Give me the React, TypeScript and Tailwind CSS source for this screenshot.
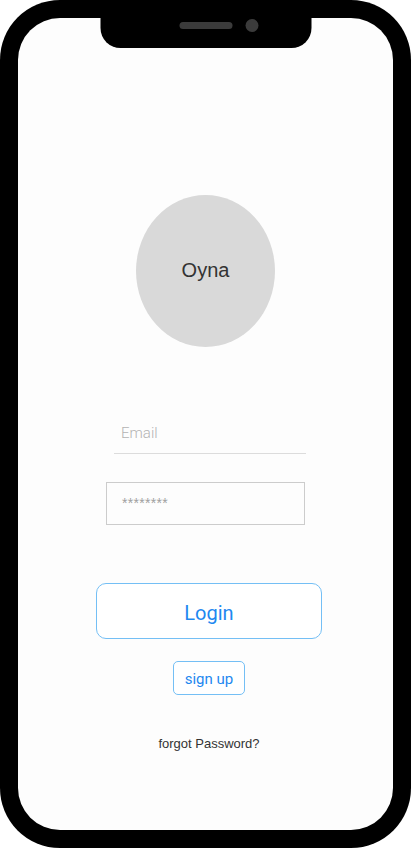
export default function App() {
  return (
    <main className="h-[848px] w-[411px] bg-white">
      <div className="h-full w-full rounded-[60px] bg-black p-[18px]">
        <div className="relative flex h-full w-full flex-col items-center rounded-[42px] bg-[#fdfdfd]">
          {/* notch */}
          <div className="absolute left-1/2 top-0 flex h-[30px] w-[211px] -translate-x-1/2 items-center justify-center gap-[13px] rounded-b-[20px] bg-black pb-[15px] pl-[26px]">
            <span className="h-[7px] w-[53px] rounded-full bg-[#3b3b3b]" />
            <span className="h-[13px] w-[13px] rounded-full bg-[#3b3b3b]" />
          </div>

          <div className="mt-[177px] flex h-[152px] w-[139px] items-center justify-center rounded-[50%] bg-[#d9d9d9] pb-[2px]">
            <span className="font-['Liberation_Sans',sans-serif] text-[20px] text-[#333]">Oyna</span>
          </div>

          <div className="ml-[9px] mt-[76px] w-[192px] border-b border-[#dcdcdc] pb-[10px] pl-[7px]">
            <span className="block font-['Roboto',sans-serif] text-[15px] font-light leading-[20px] text-[#b3b3b3]">
              Email
            </span>
          </div>

          <div className="mt-[28px] flex h-[43px] w-[199px] items-center border border-[#cccccc] pl-[15px]">
            <span className="font-['Liberation_Sans',sans-serif] text-[14px] tracking-[0.3px] text-[#a0a0a0]">********</span>
          </div>

          <button className="ml-[7px] mt-[58px] flex h-[56px] w-[226px] items-center justify-center rounded-[10px] border border-[#74bff5] bg-white pt-[4px]">
            <span className="font-['Roboto',sans-serif] text-[20px] font-normal text-[#1e88f0]">Login</span>
          </button>

          <button className="ml-[7px] mt-[22px] flex h-[34px] w-[72px] items-center justify-center rounded-[5px] border border-[#74bff5] bg-white pt-[2px]">
            <span className="font-['Roboto',sans-serif] text-[15px] text-[#1e88f0]">sign up</span>
          </button>

          <p className="ml-[7px] mt-[41px] font-['Liberation_Sans',sans-serif] text-[13px] leading-[16px] text-[#333]">
            forgot Password?
          </p>
        </div>
      </div>
    </main>
  );
}
